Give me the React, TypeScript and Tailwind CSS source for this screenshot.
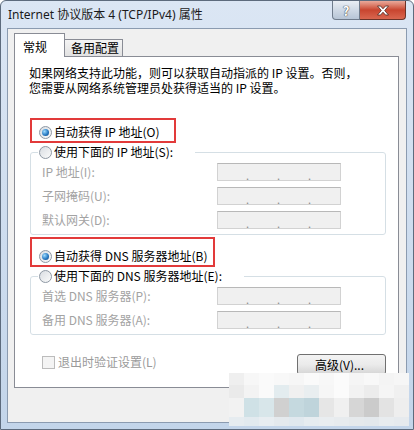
import React from "react";

const body = "font-['Noto_Sans_CJK_SC','Noto_Sans',sans-serif]";

function Radio({ checked }: { checked?: boolean }) {
  return (
    <span className="flex h-[13px] w-[13px] shrink-0 items-center justify-center rounded-full border border-[#8e98a4] bg-linear-to-br from-[#d9dde2] to-[#fbfbfb]">
      {checked && (
        <span className="h-[7px] w-[7px] rounded-full bg-[radial-gradient(circle_at_35%_35%,#9fdcff,#2a7cc4_55%,#0f3f78)]" />
      )}
    </span>
  );
}

function IpBox() {
  return (
    <div className="flex h-[18px] w-[124px] shrink-0 border border-[#d2d2d2] border-t-[#b8b8b8] bg-[#f0f0f0] text-[11px] leading-none text-[#8c8c8c]">
      {[0, 1, 2].map((i) => (
        <span key={i} className="w-[31px] pt-[6px] text-right">
          .
        </span>
      ))}
    </div>
  );
}

function FieldRow({ label }: { label: string }) {
  return (
    <div className="flex h-[18px] items-center">
      <span className="ml-[11px] w-[175px] shrink-0 text-[#a3a3a3]">{label}</span>
      <IpBox />
    </div>
  );
}

function Group({ legend, rows }: { legend: string; rows: string[] }) {
  return (
    <fieldset className="ml-[15px] w-[356px] rounded-[3px] border border-[#d5dfe5] pb-[5px]">
      <legend className="ml-[7px] pl-[1px] pr-[22px]">
        <span className="flex h-[14px] items-center gap-[2px]">
          <Radio />
          <span>{legend}</span>
        </span>
      </legend>
      <div className="mt-[4px] flex flex-col gap-[6px]">
        {rows.map((r) => (
          <FieldRow key={r} label={r} />
        ))}
      </div>
    </fieldset>
  );
}

// pixelated watermark in the lower right corner
const mosaic: { h: number; cells: string[] }[] = [
  { h: 12, cells: ["#efefef", "#f7f7f7", "#fafafa", "#f8f8f8", "#f6f6f6", "#fafafa", "#f7f7f7", "#fbfbfb", "#f5f5f5", "#f8f8f8", "#f4f4f4", "#f6f6f6"] },
  { h: 13, cells: ["#eaeaea", "#f3f3f3", "#fafafa", "#e3ecef", "#f0f0f0", "#e9eef0", "#f6f6f6", "#fbfbfb", "#f2f2f2", "#ececec", "#f5f5f5", "#f0f0f0"] },
  { h: 19, cells: ["#f2f2f2", "#cfe1e6", "#d8e6ea", "#d0d0d0", "#c5d9df", "#bfd4db", "#e6e6e6", "#f0f0f0", "#d6d6d6", "#cbcbcb", "#e3e3e3", "#eeeeee"] },
  { h: 9, cells: ["#e6ecf0", "#e2eaef", "#e8edf1", "#e4e9ed", "#e0e8ee", "#e6ecf0", "#e9edf0", "#e7ebee", "#e5e9ec", "#e3e8ec", "#e8ecef", "#e6eaee"] },
];

export default function App() {
  return (
    <div
      className={`relative flex h-[430px] w-[414px] flex-col overflow-hidden rounded-t-[6px] border border-[#5d6b7d] bg-linear-to-b from-[#dbe6f4] to-[#c3d5ea] text-[12px] leading-[14px] text-black ${body}`}
    >
      {/* Title bar */}
      <div className="flex h-[27px] shrink-0 items-center pl-[7px] font-['Noto_Sans','Noto_Sans_CJK_SC',sans-serif] text-[12px] text-[#1a1a1a]">
        Internet 协议版本 4 (TCP/IPv4) 属性
      </div>
      <div className="absolute right-[7px] top-0 flex">
        <div className="flex h-[19px] w-[28px] items-center justify-center rounded-bl-[4px] border border-t-0 border-[#6f7c8c] bg-linear-to-b from-[#e9eef4] via-[#cfd9e5] to-[#b7c5d6] text-[13px] font-bold leading-none text-white [text-shadow:0_0_1px_#333,0_0_1px_#333]">
          ?
        </div>
        <div className="flex h-[19px] w-[46px] items-center justify-center rounded-br-[4px] border border-l-0 border-t-0 border-[#6b3328] bg-linear-to-b from-[#e9a99b] via-[#c8452f] to-[#d9664f]">
          <svg width="14" height="11" viewBox="0 0 14 11">
            <path
              d="M1.5 1h3l2.5 2.8L9.5 1h3L8.7 5.5l3.8 4.5h-3L7 7.2 4.5 10h-3l3.8-4.5z"
              fill="#fff"
              stroke="#4a2a24"
              strokeWidth="0.8"
              strokeLinejoin="round"
            />
          </svg>
        </div>
      </div>

      {/* Client area */}
      <div className="mx-[6px] flex h-[395px] shrink-0 flex-col border border-[#8b9bb0] bg-[#f0f0f0] pl-[6px] pr-[7px] pt-[4px]">
        {/* Tabs */}
        <div className="flex h-[23px] items-end">
          <div className="relative z-10 -mb-px flex h-[24px] w-[51px] items-start border border-b-0 border-[#898c95] bg-white pl-[8px] pt-[6px]">
            常规
          </div>
          <div className="flex h-[17px] w-[58px] items-center border border-b-0 border-l-0 border-[#898c95] bg-linear-to-b from-[#f4f4f4] to-[#e2e2e2] pl-[6px]">
            备用配置
          </div>
        </div>

        {/* Tab panel */}
        <div className="flex h-[332px] flex-col border border-[#898c95] bg-white pt-[9px]">
          <div className="flex flex-col gap-[1px] pl-[14px]">
            <span className="h-[14px] leading-[14px]">如果网络支持此功能，则可以获取自动指派的 IP 设置。否则，</span>
            <span className="h-[14px] leading-[14px]">您需要从网络系统管理员处获得适当的 IP 设置。</span>
          </div>

          <div className="ml-[15px] mt-[23px] w-[146px] border-2 border-[#e23a3a] pb-[2px] pl-[7px] pt-[5px]">
            <div className="flex h-[14px] items-center gap-[2px]">
              <Radio checked />
              <span>自动获得 IP 地址(O)</span>
            </div>
          </div>

          <div className="mt-[2px]">
            <Group legend="使用下面的 IP 地址(S):" rows={["IP 地址(I):", "子网掩码(U):", "默认网关(D):"]} />
          </div>

          <div className="ml-[15px] mt-[2px] w-[185px] border-2 border-[#e23a3a] pb-[2px] pl-[7px] pt-[10px]">
            <div className="flex h-[14px] items-center gap-[2px]">
              <Radio checked />
              <span>自动获得 DNS 服务器地址(B)</span>
            </div>
          </div>

          <div className="mt-[2px]">
            <Group legend="使用下面的 DNS 服务器地址(E):" rows={["首选 DNS 服务器(P):", "备用 DNS 服务器(A):"]} />
          </div>

          <div className="mt-[19px] flex items-start justify-between pl-[27px] pr-[12px]">
            <div className="mt-[1px] flex items-center gap-[3px] text-[#9a9a9a]">
              <span className="h-[13px] w-[13px] border border-[#bcbcbc] bg-[#f4f4f4]" />
              <span>退出时验证设置(L)</span>
            </div>
            <div className="flex h-[21px] w-[89px] items-center justify-center rounded-[3px] border border-[#707070] bg-linear-to-b from-[#f3f3f3] via-[#ebebeb] to-[#d5d5d5] pr-[4px]">
              高级(V)...
            </div>
          </div>
        </div>
      </div>

      {/* watermark mosaic */}
      <div className="absolute left-[228px] top-[372px] flex flex-col">
        {mosaic.map((row, r) => (
          <div key={r} className="flex">
            {row.cells.map((c, i) => (
              <div key={i} className="w-[15px]" style={{ height: row.h, background: c }} />
            ))}
          </div>
        ))}
      </div>
    </div>
  );
}
